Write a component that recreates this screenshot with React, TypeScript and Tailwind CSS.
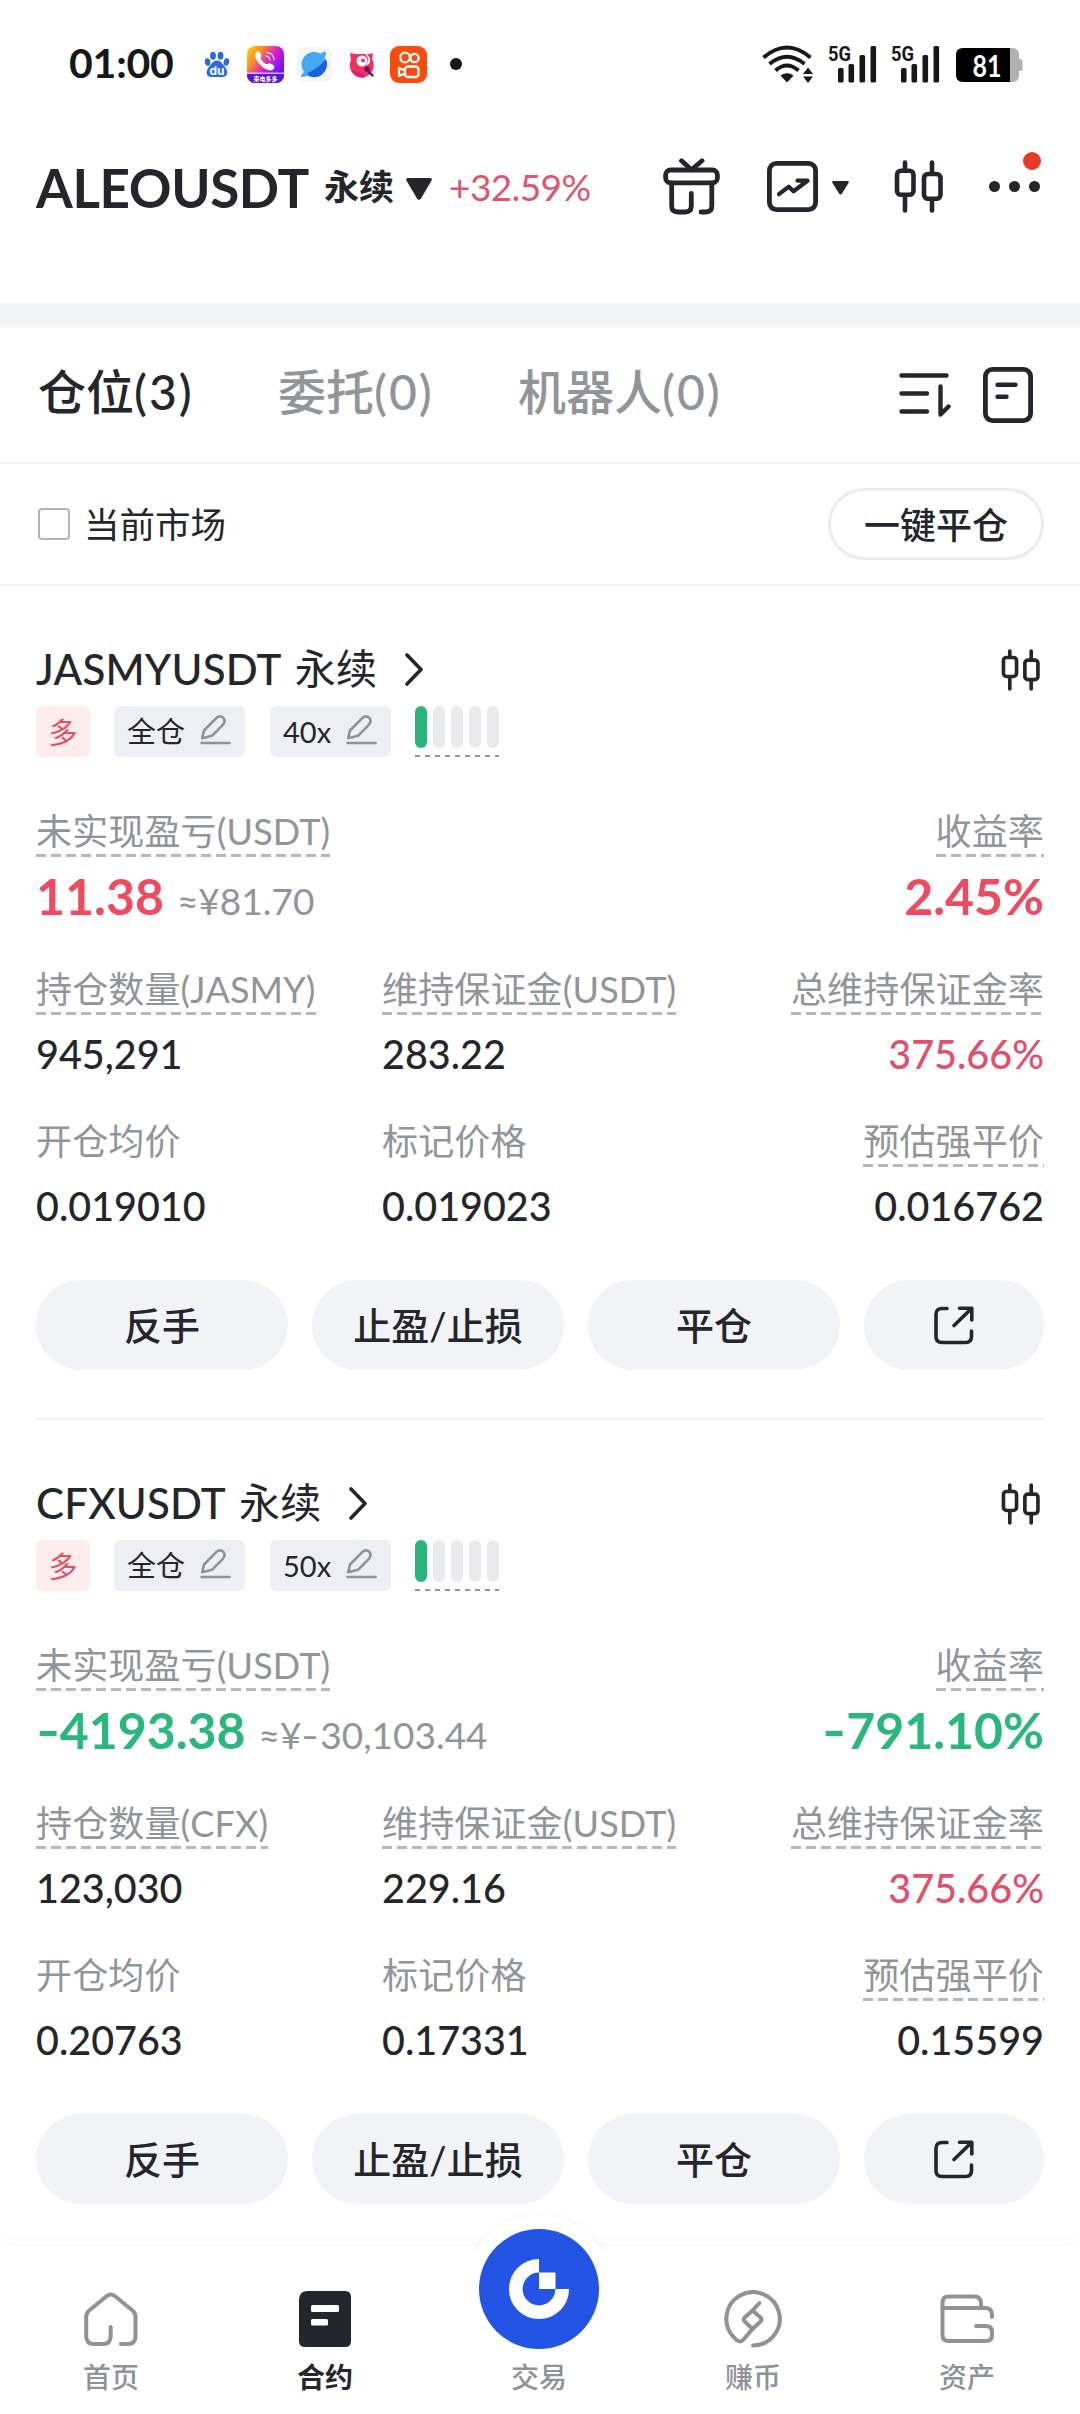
import type { ReactNode } from "react";

interface Metric {
    label: string;
    value: string;
    dashed?: boolean;
    danger?: boolean;
}

interface Position {
    symbol: string;
    leverage: string;
    pnl: string;
    pnlCny: string;
    roi: string;
    profit: boolean;
    rows: Metric[][];
}

const positions: Position[] = [
    {
        symbol: "JASMYUSDT",
        leverage: "40x",
        pnl: "11.38",
        pnlCny: "81.70",
        roi: "2.45%",
        profit: true,
        rows: [
            [
                { label: "持仓数量(JASMY)", value: "945,291", dashed: true },
                { label: "维持保证金(USDT)", value: "283.22", dashed: true },
                { label: "总维持保证金率", value: "375.66%", dashed: true, danger: true },
            ],
            [
                { label: "开仓均价", value: "0.019010" },
                { label: "标记价格", value: "0.019023" },
                { label: "预估强平价", value: "0.016762", dashed: true },
            ],
        ],
    },
    {
        symbol: "CFXUSDT",
        leverage: "50x",
        pnl: "4193.38",
        pnlCny: "30,103.44",
        roi: "791.10%",
        profit: false,
        rows: [
            [
                { label: "持仓数量(CFX)", value: "123,030", dashed: true },
                { label: "维持保证金(USDT)", value: "229.16", dashed: true },
                { label: "总维持保证金率", value: "375.66%", dashed: true, danger: true },
            ],
            [
                { label: "开仓均价", value: "0.20763" },
                { label: "标记价格", value: "0.17331" },
                { label: "预估强平价", value: "0.15599", dashed: true },
            ],
        ],
    },
];

const CandleIcon = ({ className }: { className: string }) => (
    <svg viewBox="0 0 49 53" className={className} fill="none" stroke="#24262c" strokeWidth="4.6" strokeLinecap="round">
        <path d="M11 2.5V9M11 37v13.5M38 2.5V12M38 41v9.5" />
        <rect x="3" y="10.7" width="16.5" height="24" rx="4" />
        <rect x="30" y="14" width="16.5" height="24.7" rx="4" />
    </svg>
);

const PencilIcon = () => (
    <svg viewBox="0 0 31 31" className="size-[31px]" fill="none" stroke="#8f9297" strokeWidth="2.6" strokeLinecap="round" strokeLinejoin="round">
        <path d="M2.2 24.3 4 16.5 16.5 3.800Q20 .8 23.300 3.800 26 7.200 22.800 10.800L12 21.800Z" />
        <path d="M1.500 29h28" />
    </svg>
);

const SignalIcon = () => (
    <svg viewBox="0 -10 49 48" className="-mt-[10px] h-[48px] w-[49px]" fill="#17181a">
        <text x="0" y="16" fontSize="21" fontWeight="700" textLength="23" lengthAdjust="spacingAndGlyphs" fontFamily="Roboto, sans-serif">5G</text>
        <rect x="10" y="23" width="5.6" height="14.5" rx="1.6" />
        <rect x="20.5" y="19" width="5.6" height="18.5" rx="1.6" />
        <rect x="31.5" y="10" width="5.6" height="27.5" rx="1.6" />
        <rect x="42.5" y="1" width="5.6" height="36.5" rx="1.6" />
    </svg>
);

const StatusBar = () => (
    <div className="flex h-[130px] shrink-0 items-start pt-[45px] pl-[69px]">
        <span className="w-[105px] text-[41px] leading-[36px] font-bold tracking-[-0.2px] text-[#17181a]">01:00</span>
        <svg viewBox="0 0 26 28" className="mt-[6px] ml-[30px] h-[28px] w-[26px]">
            <g fill="#2a6ae0">
                <ellipse cx="3.6" cy="11" rx="2.7" ry="3.8" transform="rotate(-12 3.6 11)" />
                <ellipse cx="9" cy="4.8" rx="2.9" ry="4" />
                <ellipse cx="16.5" cy="4.8" rx="2.9" ry="4" />
                <ellipse cx="22.4" cy="11" rx="2.7" ry="3.8" transform="rotate(12 22.4 11)" />
                <path d="M13 9.500c4 0 5.500 3.500 8 6.500 3.500 4 3.500 10-3 10H8c-6.500 0-6.500-6-3-10 2.500-3 4-6.500 8-6.500z" />
            </g>
            <text x="13" y="23.500" textAnchor="middle" fontSize="12" fontWeight="700" fill="#fff" fontFamily="Inter, sans-serif">du</text>
        </svg>
        <svg viewBox="0 0 37 37" className="mt-[1px] ml-[17px] size-[37px]">
            <defs>
                <linearGradient id="call" x1="0" y1="0" x2="1" y2="0.7">
                    <stop offset="0" stopColor="#ffe000" />
                    <stop offset="0.3" stopColor="#ff8a2a" />
                    <stop offset="0.6" stopColor="#d41fd0" />
                    <stop offset="1" stopColor="#5a10ff" />
                </linearGradient>
                <clipPath id="callClip">
                    <rect width="37" height="37" rx="8" />
                </clipPath>
            </defs>
            <g clipPath="url(#callClip)">
                <rect width="37" height="37" fill="url(#call)" />
                <rect y="27" width="37" height="10" fill="#5a14e0" />
                <path d="M0 27.200h37" stroke="#fff" strokeWidth="1" />
                <path d="M9 6.500c2-2 4-.5 5 2s-1.500 3 0 5 3.500 4 5 4.500c2 .5 2-1.500 4.500-.5s5 3 3.500 5c-3 4-9 1-13-3S6 10 9 6.500z" fill="#fff" />
                <path d="M18.500 10q4 0 4.500 4.500M19 6.500q7.500 0 8 7.500" stroke="#fff" strokeWidth="1.200" fill="none" />
                <text x="18.500" y="34.500" textAnchor="middle" fontSize="6" fontWeight="700" fill="#fff" fontFamily="'Noto Sans CJK SC', sans-serif">来电多多</text>
            </g>
        </svg>
        <svg viewBox="0 0 37 37" className="mt-[1px] ml-[12px] size-[37px]">
            <rect x="1" y="1" width="35" height="35" rx="8" fill="#f4f5f6" />
            <circle cx="18" cy="18.500" r="12.500" fill="#43a8f5" />
            <path d="M30 13A13 13 0 0 1 9.500 28Q22 23 30 13z" fill="#1d5fe0" />
            <path d="M24 8q7-5 6 0-1 3-2 4M9 25q-6 6-3 6 3 0 7-2" fill="#43a8f5" />
        </svg>
        <svg viewBox="0 0 28 28" className="mt-[6px] ml-[15px] size-[28px]">
            <path d="M2 2l6 1h14l3-1-1 6a12 12 0 1 1-21 1z" fill="#f0305e" />
            <path d="M3 19q9 2 15 7a12 12 0 0 1-15-7z" fill="#d81b8c" />
            <circle cx="14" cy="10" r="5.500" fill="#fff" />
            <circle cx="15" cy="9.500" r="2" fill="#f0305e" />
            <path d="M18 3q6 6 1 11" stroke="#fff" strokeWidth="1.600" fill="none" />
            <circle cx="19" cy="18" r="2.600" fill="#5b1468" />
            <path d="M20 20l4.500 4.500" stroke="#5b1468" strokeWidth="2.400" strokeLinecap="round" />
        </svg>
        <svg viewBox="0 0 37 37" className="mt-[1px] ml-[14px] size-[37px]" fill="none" stroke="#fff" strokeWidth="2.300">
            <rect width="37" height="37" rx="9" fill="#fa4b0c" stroke="none" />
            <circle cx="15" cy="11.500" r="4.800" />
            <circle cx="24.500" cy="12" r="4.200" />
            <rect x="15" y="20.500" width="13.500" height="10.500" rx="3" />
            <path d="M15 24.500l-6-2.500v8l6-2.500" strokeLinejoin="round" />
        </svg>
        <div className="mt-[13px] ml-[23px] size-[12px] rounded-full bg-[#17181a]" />
        <svg viewBox="0 0 52 38" className="ml-[300px] h-[38px] w-[52px]" fill="none" stroke="#17181a" strokeWidth="4">
            <path d="M1.500 12.500Q25 -7.500 48.500 12.500" />
            <path d="M7.500 19Q25 4.500 42.500 19" />
            <path d="M13.500 25.500Q25 15.500 36.500 25.500" />
            <path d="M25 37.500l-6.500-7q6.500-4.500 13 0z" fill="#17181a" stroke="none" />
            <path d="M46 22.500l5 6.500H41zM46 38l5-6.500H41z" fill="#17181a" stroke="none" />
        </svg>
        <div className="ml-[14px] flex gap-[14px]">
            <SignalIcon />
            <SignalIcon />
        </div>
        <svg viewBox="0 -6 67 46" className="-mt-[3px] ml-[16px] h-[46px] w-[67px]">
            <path d="M54 0h2q7 0 7 7v4h1.500q2 0 2 2v8q0 2-2 2H63v4q0 7-7 7h-2z" fill="#b1b1b1" />
            <path d="M7 0h47v34H7q-7 0-7-7V7q0-7 7-7z" fill="#000" />
            <text x="31" y="28.500" textAnchor="middle" fontSize="31" fontWeight="700" fill="#fff" textLength="29" lengthAdjust="spacingAndGlyphs" fontFamily="Lato, sans-serif">81</text>
        </svg>
    </div>
);

const MarketHeader = () => (
    <header className="flex h-[173px] shrink-0 items-start pt-[28px] pl-[36px]">
        <h1 className="w-[288px] text-[53px] leading-[60px] font-bold tracking-[-0.4px] text-[#24262c]">ALEOUSDT</h1>
        <span className="text-[35px] leading-[56px] font-bold">永续</span>
        <svg viewBox="0 0 26 22" className="mt-[20px] ml-[12px] h-[22px] w-[26px]" fill="#24262c">
            <path d="M2.500 0h21q3.500 0 1.800 3L15 20.500q-2 2.500-4 0L.700 3Q-1 0 2.500 0z" />
        </svg>
        <span className="ml-[17px] w-[214px] text-[37px] leading-[58px] tracking-[-0.6px] text-[#dd566b]">+32.59%</span>
        <svg viewBox="0 0 57 57" className="size-[57px]" fill="none" stroke="#24262c" strokeWidth="4.800" strokeLinecap="round" strokeLinejoin="round">
            <path d="M18.500 2.800l10 9 10.500-9" />
            <rect x="2.600" y="12" width="51.800" height="12.800" rx="5" />
            <path d="M8.700 25v23q0 6 6 6h7.600q6 0 6-6V35.500M48.800 25v23q0 6-6 6H38" />
        </svg>
        <svg viewBox="0 0 51 51" className="mt-[3px] ml-[47px] size-[51px]" fill="none" stroke="#24262c" strokeWidth="4.800" strokeLinecap="round" strokeLinejoin="round">
            <rect x="2.400" y="2.400" width="46.200" height="46.200" rx="7" />
            <path d="M12 33.200l9.800-7.500 4.700 4.500 14-10.500H30.500" strokeWidth="4.200" />
        </svg>
        <svg viewBox="0 0 17 14" className="mt-[23px] ml-[14px] h-[14px] w-[17px]" fill="#24262c">
            <path d="M1.500 0h14q2 0 1 2L10 12.500q-1.500 2-3 0L.500 2q-1-2 1-2z" />
        </svg>
        <CandleIcon className="mt-[2px] ml-[45px] h-[53px] w-[49px]" />
        <div className="relative mt-[23px] ml-[46px] flex gap-[9px]">
            <i className="size-[11px] rounded-full bg-[#24262c]" />
            <i className="size-[11px] rounded-full bg-[#24262c]" />
            <i className="size-[11px] rounded-full bg-[#24262c]" />
            <i className="absolute -top-[29px] left-[34px] size-[18px] rounded-full bg-[#e93a29]" />
        </div>
    </header>
);

const Tab = ({ label, count, className }: { label: string; count: number; className: string }) => (
    <span className={className}>
        {label}
        <span className="tracking-[2px]">({count})</span>
    </span>
);

const Label = ({ children, dashed }: { children: ReactNode; dashed?: boolean }) => (
    <div className="w-fit">
        <p className="h-[46px] text-[36px] leading-[46px] tracking-[0.15px] whitespace-nowrap text-[#919499]">{children}</p>
        <div className={dashed ? "h-[3px] bg-[repeating-linear-gradient(90deg,#b5b7bb_0_10px,transparent_10px_15px)]" : "h-[3px]"} />
    </div>
);

const Tag = ({ children }: { children: ReactNode }) => (
    <div className="flex h-[51px] items-center rounded-[6px] bg-[#edeff5] pr-[14px] pl-[13px]">
        <span className="text-[29px] leading-[53px]">{children}</span>
        <div className="-mt-[4px] ml-[15px]">
            <PencilIcon />
        </div>
    </div>
);

const Minus = () => <span className="mr-[5px] inline-block origin-left scale-x-130">-</span>;

const ActionButton = ({ children }: { children: ReactNode }) => (
    <button className="flex h-[90px] items-center justify-center rounded-full bg-[#f1f3f7] text-[38px] leading-[90px] font-medium">{children}</button>
);

const PositionCard = ({ position }: { position: Position }) => {
    const color = position.profit ? "text-[#ee4a60]" : "text-[#2ab77d]";

    return (
        <section className="px-[36px] pt-[53px]">
            <div className="flex h-[60px] items-center">
                <h2 className="flex text-[42px] leading-[62px] font-medium tracking-[0.2px]">
                    {position.symbol}
                    <span className="ml-[13px] text-[41px] font-normal">永续</span>
                </h2>
                <svg viewBox="0 0 20 33" className="ml-[27px] h-[33px] w-[20px]" fill="none" stroke="#24262c" strokeWidth="3.600" strokeLinecap="round" strokeLinejoin="round">
                    <path d="M3 2l14 14.500L3 31" />
                </svg>
                <CandleIcon className="mt-[1px] mr-[4px] ml-auto h-[42px] w-[39px]" />
            </div>
            <div className="mt-[7px] flex h-[51px]">
                <div className="mr-[24px] flex w-[54px] justify-center rounded-[6px] bg-[#ffeced] text-[29px] leading-[53px] text-[#e0506a]">多</div>
                <Tag>全仓</Tag>
                <div className="w-[25px]" />
                <Tag>{position.leverage}</Tag>
                <div className="ml-[24px]">
                    <div className="flex gap-[6px]">
                        <i className="h-[42px] w-[12px] rounded-full bg-[#2ab57d]" />
                        <i className="h-[42px] w-[12px] rounded-full bg-[#e9eaed]" />
                        <i className="h-[42px] w-[12px] rounded-full bg-[#e9eaed]" />
                        <i className="h-[42px] w-[12px] rounded-full bg-[#e9eaed]" />
                        <i className="h-[42px] w-[12px] rounded-full bg-[#e9eaed]" />
                    </div>
                    <div className="mt-[7px] h-[2px] bg-[repeating-linear-gradient(90deg,#919499_0_5px,transparent_5px_10px)]" />
                </div>
            </div>
            <div className="mt-[51px] flex justify-between">
                <div>
                    <Label dashed>未实现盈亏(USDT)</Label>
                    <p className="mt-[8px] flex h-[60px] items-baseline leading-[62px]">
                        <span className={`text-[50px] font-bold ${color}`}>
                            {!position.profit && <Minus />}
                            {position.pnl}
                        </span>
                        <span className="ml-[13px] text-[37px] text-[#919499]">
                            ≈¥{!position.profit && <Minus />}
                            {position.pnlCny}
                        </span>
                    </p>
                </div>
                <div className="flex flex-col items-end">
                    <Label dashed>收益率</Label>
                    <p className={`mt-[8px] h-[60px] text-[50px] leading-[62px] font-bold ${color}`}>
                        {!position.profit && <Minus />}
                        {position.roi}
                    </p>
                </div>
            </div>
            <div className="mt-[41px] flex flex-col gap-[37px]">
                {position.rows.map((row) => (
                    <div key={row[0].label} className="grid grid-cols-[346px_1fr_auto]">
                        {row.map((metric) => (
                            <div key={metric.label} className="flex flex-col gap-[10px] last:items-end">
                                <Label dashed={metric.dashed}>{metric.label}</Label>
                                <p className={metric.danger ? "h-[56px] text-[39.500px] leading-[57px] font-medium text-[#e0506a]" : "h-[56px] text-[39.500px] leading-[57px] font-medium"}>
                                    {metric.value}
                                </p>
                            </div>
                        ))}
                    </div>
                ))}
            </div>
            <div className="mt-[47px] grid grid-cols-[252px_252px_252px_180px] gap-[24px]">
                <ActionButton>反手</ActionButton>
                <ActionButton>止盈/止损</ActionButton>
                <ActionButton>平仓</ActionButton>
                <ActionButton>
                    <svg viewBox="0 0 40 39" className="h-[39px] w-[40px]" fill="none" stroke="#24262c" strokeWidth="3.600" strokeLinecap="round" strokeLinejoin="round">
                        <path d="M13 2.500H8Q2 2.500 2 8.500v22q0 6 6 6h23.500q6 0 6-6V25" />
                        <path d="M20 19.500L37 3M25.500 2.200h12.300V14" />
                    </svg>
                </ActionButton>
            </div>
        </section>
    );
};

const NavItem = ({ label, active, children }: { label: string; active?: boolean; children: ReactNode }) => (
    <div className="flex flex-1 flex-col items-center pt-[42px]">
        <div className="flex h-[60px] items-center justify-center">{children}</div>
        <span className={active ? "mt-[10px] text-[28px] leading-[36px] font-bold" : "mt-[10px] text-[28px] leading-[36px] font-medium text-[#8f9297]"}>{label}</span>
    </div>
);

const BottomNav = () => (
    <nav className="relative mt-auto flex h-[167px] shrink-0 bg-white pr-[6px] pl-[4px] shadow-[0_-3px_14px_rgba(0,0,0,0.03)]">
        <NavItem label="首页">
            <svg viewBox="0 0 54 54" className="size-[54px]" fill="none" stroke="#8f9297" strokeWidth="4" strokeLinecap="round" strokeLinejoin="round">
                <path d="M37 52h6.500q8 0 8-8V25q0-4-3-6.500L30.500 3.800q-3.700-2.600-7.400 0L5.200 18.500Q2.200 21 2.200 25v19q0 8 8 8h8.500q8 0 8-8V35" />
            </svg>
        </NavItem>
        <NavItem label="合约" active>
            <svg viewBox="0 0 52 56" className="h-[56px] w-[52px]">
                <path d="M9 0h37q6 0 6 6v44q0 6-6 6H6q-6 0-6-6V9q0-9 9-9z" fill="#24262f" />
                <rect x="12" y="14" width="28" height="7" rx="1.500" fill="#fff" />
                <rect x="12" y="28" width="17" height="6.500" rx="1.500" fill="#fff" />
            </svg>
        </NavItem>
        <NavItem label="交易">
            {/* bump behind the round trade button, only its top shows over the bar */}
            <div className="absolute -top-[40px] left-[449px] h-[44px] w-[180px] overflow-hidden">
                <div className="mx-auto mt-[8px] size-[148px] rounded-full bg-white shadow-[0_-2px_6px_rgba(0,0,0,0.03)]" />
            </div>
            <svg viewBox="0 0 120 120" className="absolute -top-[18px] left-[479px] size-[120px]">
                <circle cx="60" cy="60" r="60" fill="#2354e6" />
                <path d="M60 36.800A23.200 23.200 0 1 0 83.200 60" fill="none" stroke="#fff" strokeWidth="13.600" />
                <path d="M60 43.500h16.500V60H60z" fill="#fff" />
            </svg>
        </NavItem>
        <NavItem label="赚币">
            <svg viewBox="0 0 58 58" className="size-[58px]" fill="none" stroke="#8f9297" strokeWidth="4" strokeLinecap="round" strokeLinejoin="round">
                <path d="M29 55.500A26.700 26.700 0 1 0 10.500 48q5 6 9 1.500l9-10.500" />
                <path d="M28.500 20.500l-7.800 7q-2 2 0 4l7.800 7.500 8-7.500q2-2 0-4zM28.500 20.500l7-7.500" />
            </svg>
        </NavItem>
        <NavItem label="资产">
            <svg viewBox="0 0 54 50" className="h-[50px] w-[54px]" fill="none" stroke="#8f9297" strokeWidth="4" strokeLinecap="round" strokeLinejoin="round">
                <path d="M41 14V9.500q0-7-7-7H8.500q-6 0-6 6V41q0 6 6 6H46q6 0 6-6v-3q0-6-6-6H36" />
                <path d="M2.500 14H45q7 0 7 7v2" />
            </svg>
        </NavItem>
    </nav>
);

export default function App() {
    return (
        <div className="flex h-[2414px] w-[1080px] flex-col overflow-hidden bg-white font-[Lato,'Noto_Sans_CJK_SC',sans-serif] text-[#24262c]">
            <StatusBar />
            <MarketHeader />
            <div className="h-[24px] shrink-0 bg-[#f3f4f6]" />
            <div className="flex h-[137px] shrink-0 items-center border-b-2 border-[#f0f0f1] pr-[47px] pl-[38px] text-[48px] leading-[60px] font-medium">
                <div className="-mt-[5px] flex">
                    <Tab label="仓位" count={3} className="w-[240px]" />
                    <Tab label="委托" count={0} className="w-[240px] text-[#919499]" />
                    <Tab label="机器人" count={0} className="text-[#919499]" />
                </div>
                <svg viewBox="0 0 52 44" className="ml-auto h-[44px] w-[52px]" fill="none" stroke="#24262c" strokeWidth="4.400" strokeLinecap="round" strokeLinejoin="round">
                    <path d="M2.500 2.500h45M2.500 20.500H28M2.500 38.500H28M41.500 13.500v28l8-8" />
                </svg>
                <svg viewBox="0 0 50 56" className="ml-[32px] h-[56px] w-[50px]" fill="none" stroke="#24262c" strokeWidth="4.800" strokeLinecap="round">
                    <rect x="2.400" y="2.400" width="45.200" height="51.200" rx="7" />
                    <path d="M14.500 17.700h18M14.500 29.700h9" strokeWidth="4.400" />
                </svg>
            </div>
            <div className="flex h-[122px] shrink-0 items-center border-b-2 border-[#f0f0f1] px-[36px]">
                <div className="ml-[2px] size-[32px] rounded-[4px] border-2 border-[#b5b5b7]" />
                <span className="mt-[2px] ml-[14px] text-[35.500px] leading-[44px]">当前市场</span>
                <button className="ml-auto h-[72px] w-[216px] rounded-full border-[3px] border-[#ebecee] text-[36px] leading-[68px] font-medium">一键平仓</button>
            </div>
            <main className="flex flex-col">
                <PositionCard position={positions[0]} />
                <div className="mx-[36px] mt-[48px] h-[2px] bg-[#efeff0]" />
                <PositionCard position={positions[1]} />
            </main>
            <BottomNav />
        </div>
    );
}
